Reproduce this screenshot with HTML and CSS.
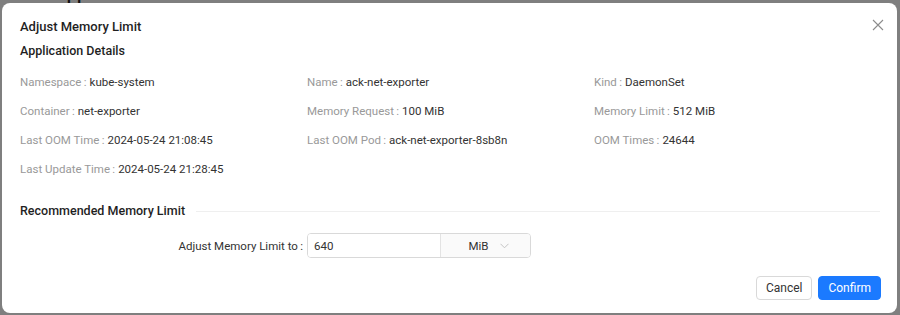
FILE: index.html
```html
<!DOCTYPE html>
<html lang="en">
<head>
  <meta charset="UTF-8">
  <meta name="viewport" content="width=device-width, initial-scale=1.0">
  <title>Adjust Memory Limit</title>
  <link rel="stylesheet" href="styles.css">
</head>
<body>
  <div class="page">
    <h2 class="page-title">Applications</h2>
  </div>

  <div class="mask"></div>

  <div class="modal">
    <button class="close" aria-label="Close">
      <svg width="12" height="12" viewBox="0 0 12 12">
        <path d="M1 1L11 11M11 1L1 11" stroke="#8c8c8c" stroke-width="1.1" fill="none"/>
      </svg>
    </button>

    <div class="modal-title">Adjust Memory Limit</div>
    <div class="section-title">Application Details</div>

    <div class="details">
      <div class="item"><span class="label">Namespace&thinsp;:</span><span class="value">kube-system</span></div>
      <div class="item"><span class="label">Name&thinsp;:</span><span class="value">ack-net-exporter</span></div>
      <div class="item"><span class="label">Kind&thinsp;:</span><span class="value">DaemonSet</span></div>
      <div class="item"><span class="label">Container&thinsp;:</span><span class="value">net-exporter</span></div>
      <div class="item"><span class="label">Memory Request&thinsp;:</span><span class="value">100 MiB</span></div>
      <div class="item"><span class="label">Memory Limit&thinsp;:</span><span class="value">512 MiB</span></div>
      <div class="item"><span class="label">Last OOM Time&thinsp;:</span><span class="value">2024-05-24 21:08:45</span></div>
      <div class="item"><span class="label">Last OOM Pod&thinsp;:</span><span class="value">ack-net-exporter-8sb8n</span></div>
      <div class="item"><span class="label">OOM Times&thinsp;:</span><span class="value">24644</span></div>
      <div class="item"><span class="label">Last Update Time&thinsp;:</span><span class="value">2024-05-24 21:28:45</span></div>
    </div>

    <div class="divider">
      <span class="divider-text">Recommended Memory Limit</span>
      <span class="divider-line"></span>
    </div>

    <div class="form-row">
      <label class="form-label" for="limit">Adjust Memory Limit to&thinsp;:</label>
      <div class="input-group">
        <input id="limit" class="input" type="text" value="640">
        <div class="unit">
          <span>MiB</span>
          <svg width="9" height="6" viewBox="0 0 9 6">
            <path d="M0.5 0.8L4.5 4.8L8.5 0.8" stroke="#c4c4c4" stroke-width="1" fill="none"/>
          </svg>
        </div>
      </div>
    </div>

    <div class="footer">
      <button class="btn">Cancel</button>
      <button class="btn btn-primary">Confirm</button>
    </div>
  </div>
</body>
</html>
```

FILE: styles.css
```css
body {
  margin: 0;
  font-family: Roboto, "Noto Sans CJK SC", sans-serif;
  background: #fff;
  color: #333;
  overflow: hidden;
}
.page {
  padding: 0 0 0 55px;
}
.page-title {
  margin: -17px 0 0;
  font-size: 18px;
  font-weight: 500;
  color: #222;
}
.mask {
  position: fixed;
  inset: 0;
  background: rgba(0, 0, 0, 0.5);
}
.modal {
  position: fixed;
  left: 2px;
  top: 3px;
  width: 895px;
  height: 310px;
  box-sizing: border-box;
  padding: 13px 16px 0 18px;
  background: #fff;
  border-radius: 8px;
}
.close {
  position: absolute;
  right: 13px;
  top: 16px;
  padding: 0;
  border: none;
  background: none;
  cursor: pointer;
  line-height: 0;
}
.modal-title {
  font-size: 13px;
  font-weight: 500;
  line-height: 22px;
  color: #1f1f1f;
}
.section-title {
  margin-top: 2px;
  font-size: 12.5px;
  font-weight: 500;
  line-height: 22px;
  color: #1f1f1f;
}
.details {
  display: grid;
  grid-template-columns: repeat(3, 1fr);
  row-gap: 9px;
  margin-top: 10px;
  font-size: 11.5px;
  line-height: 20px;
}
.label {
  margin-right: 3px;
  color: #999;
}
.value {
  color: #333;
}
.divider {
  display: flex;
  align-items: center;
  margin-top: 21px;
  margin-right: 1px;
}
.divider-text {
  font-size: 12.5px;
  font-weight: 500;
  line-height: 22px;
  color: #1f1f1f;
}
.divider-line {
  flex: 1;
  height: 1px;
  margin-left: 11px;
  background: #efefef;
}
.form-row {
  display: flex;
  align-items: center;
  margin-top: 11px;
}
.form-label {
  width: 283px;
  text-align: right;
  font-size: 11.5px;
  color: #333;
}
.input-group {
  display: flex;
  margin-left: 4px;
  width: 224px;
  height: 25px;
  box-sizing: border-box;
  border: 1px solid #d9d9d9;
  border-radius: 4px;
  overflow: hidden;
}
.input {
  width: 133px;
  padding: 0 6px;
  box-sizing: border-box;
  border: none;
  border-right: 1px solid #e3e3e3;
  font-family: inherit;
  font-size: 11.5px;
  color: #333;
  outline: none;
}
.unit {
  flex: 1;
  display: flex;
  align-items: center;
  justify-content: center;
  gap: 11px;
  padding-left: 6px;
  background: #fafafa;
  font-size: 11.5px;
  color: #333;
}
.footer {
  display: flex;
  justify-content: flex-end;
  gap: 6px;
  margin-top: 18px;
}
.btn {
  height: 24px;
  padding: 0 9px;
  border: 1px solid #d9d9d9;
  border-radius: 4px;
  background: #fff;
  font-family: inherit;
  font-size: 12px;
  color: #333;
  cursor: pointer;
}
.btn-primary {
  border-color: #1b7aff;
  background: #1b7aff;
  color: #fff;
}
```
